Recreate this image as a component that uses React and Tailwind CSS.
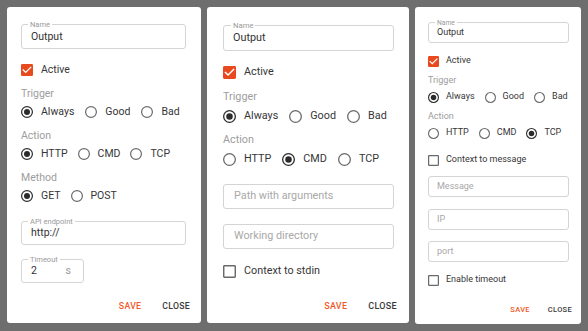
import React from "react";

const FONT = { fontFamily: 'Roboto, "Liberation Sans", Arial, sans-serif' };

function Radio({ checked, cls }) {
  return (
    <svg viewBox="0 0 20 20" className={cls + " shrink-0"}>
      <circle cx="10" cy="10" r="9" fill="none" stroke={checked ? "#2b2b2b" : "#6a6a6a"} strokeWidth="2" />
      {checked && <circle cx="10" cy="10" r="5" fill="#2b2b2b" />}
    </svg>
  );
}

function Check({ checked, cls }) {
  if (checked) {
    return (
      <svg viewBox="3 3 18 18" className={cls + " shrink-0"}>
        <rect x="3" y="3" width="18" height="18" rx="2" fill="#e8491d" />
        <path d="M10 17l-5-5 1.41-1.41L10 14.17l7.59-7.59L19 8l-9 9z" fill="#fff" />
      </svg>
    );
  }
  return (
    <svg viewBox="3 3 18 18" className={cls + " shrink-0"}>
      <path
        d="M19 5v14H5V5h14m0-2H5c-1.1 0-2 .9-2 2v14c0 1.1.9 2 2 2h14c1.1 0 2-.9 2-2V5c0-1.1-.9-2-2-2z"
        fill="#6a6a6a"
      />
    </svg>
  );
}

function RadioRow({ options, selected, rowCls, itemCls, iconCls }) {
  return (
    <div className={"flex items-center " + rowCls}>
      {options.map((o) => (
        <div key={o} className={"flex items-center " + itemCls}>
          <Radio checked={o === selected} cls={iconCls} />
          <span>{o}</span>
        </div>
      ))}
    </div>
  );
}

function Field({ label, value, placeholder, boxCls, labelCls, suffix }) {
  return (
    <div className={"relative rounded-[3px] border border-[#d4d4d4] flex items-center " + boxCls}>
      {label && (
        <span className={"absolute bg-white text-[#9a9a9a] leading-none " + labelCls}>{label}</span>
      )}
      {value ? (
        <span className="text-[#333333] flex-1">{value}</span>
      ) : (
        <span className="text-[#a8a8a8] flex-1">{placeholder}</span>
      )}
      {suffix && <span className="text-[#9a9a9a]">{suffix}</span>}
    </div>
  );
}

function Buttons({ cls, gapCls }) {
  return (
    <div className={"flex items-center justify-end font-medium tracking-[0.3px] " + cls}>
      <div className={"flex items-center " + gapCls}>
        <span className="text-[#f05a2a]">SAVE</span>
        <span className="text-[#3a3a3a]">CLOSE</span>
      </div>
    </div>
  );
}

function Panel1() {
  return (
    <div className="w-[194px] h-[316px] bg-white rounded-[3px] shrink-0 flex flex-col pl-[14px] pr-[15px] pt-[17px] text-[10.5px] text-[#363636]">
      <Field label="Name" value="Output" boxCls="h-[25px] px-[9px]" labelCls="text-[7.5px] -top-[4px] left-[6px] px-[2px]" />
      <div className="mt-[12px] h-[18px] flex items-center gap-[8px]">
        <Check checked cls="w-[12px] h-[12px]" />
        <span>Active</span>
      </div>
      <div className="mt-[7px] h-[16px] flex items-center text-[#9d9d9d]">Trigger</div>
      <RadioRow options={["Always", "Good", "Bad"]} selected="Always" rowCls="mt-[1px] h-[18px] gap-[11px]" itemCls="gap-[8px]" iconCls="w-[12px] h-[12px]" />
      <div className="mt-[7px] h-[16px] flex items-center text-[#9d9d9d]">Action</div>
      <RadioRow options={["HTTP", "CMD", "TCP"]} selected="HTTP" rowCls="mt-[1px] h-[18px] gap-[10px]" itemCls="gap-[8px]" iconCls="w-[12px] h-[12px]" />
      <div className="mt-[7px] h-[16px] flex items-center text-[#9d9d9d]">Method</div>
      <RadioRow options={["GET", "POST"]} selected="GET" rowCls="mt-[1px] h-[18px] gap-[10px]" itemCls="gap-[8px]" iconCls="w-[12px] h-[12px]" />
      <Field label="API endpoint" value="http://" boxCls="mt-[16px] h-[24px] px-[9px]" labelCls="text-[7.5px] -top-[4px] left-[6px] px-[2px]" />
      <Field label="Timeout" value="2" suffix="s" boxCls="mt-[14px] h-[24px] w-[63px] pl-[9px] pr-[12px]" labelCls="text-[7.5px] -top-[4px] left-[6px] px-[2px]" />
      <Buttons cls="mt-[14px] h-[20px] -mr-[4px] text-[8.7px]" gapCls="gap-[21px]" />
    </div>
  );
}

function Panel2() {
  return (
    <div className="w-[202px] h-[316px] bg-white rounded-[3px] shrink-0 flex flex-col pl-[16px] pr-[15px] pt-[18px] text-[10.8px] text-[#363636]">
      <Field label="Name" value="Output" boxCls="h-[26px] px-[9px]" labelCls="text-[7.7px] -top-[4px] left-[7px] px-[2px]" />
      <div className="mt-[12px] h-[18px] flex items-center gap-[8px]">
        <Check checked cls="w-[13px] h-[13px]" />
        <span>Active</span>
      </div>
      <div className="mt-[8px] h-[16px] flex items-center text-[#9d9d9d]">Trigger</div>
      <RadioRow options={["Always", "Good", "Bad"]} selected="Always" rowCls="mt-[1px] h-[20px] gap-[11px]" itemCls="gap-[8px]" iconCls="w-[13px] h-[13px]" />
      <div className="mt-[6px] h-[16px] flex items-center text-[#9d9d9d]">Action</div>
      <RadioRow options={["HTTP", "CMD", "TCP"]} selected="CMD" rowCls="mt-[1px] h-[20px] gap-[11px]" itemCls="gap-[8px]" iconCls="w-[13px] h-[13px]" />
      <Field placeholder="Path with arguments" boxCls="mt-[15px] h-[25px] px-[10px]" />
      <Field placeholder="Working directory" boxCls="mt-[15px] h-[25px] px-[10px]" />
      <div className="mt-[13px] h-[18px] flex items-center gap-[8px]">
        <Check cls="w-[13px] h-[13px]" />
        <span>Context to stdin</span>
      </div>
      <Buttons cls="mt-[17px] h-[20px] -mr-[3px] text-[9px]" gapCls="gap-[21px]" />
    </div>
  );
}

function Panel3() {
  return (
    <div className="w-[166px] h-[317px] bg-white rounded-[3px] shrink-0 flex flex-col pl-[13px] pr-[12px] pt-[15px] text-[9px] text-[#363636]">
      <Field label="Name" value="Output" boxCls="h-[21px] px-[8px]" labelCls="text-[6.7px] -top-[3px] left-[6px] px-[2px]" />
      <div className="mt-[10px] h-[16px] flex items-center gap-[7px]">
        <Check checked cls="w-[11px] h-[11px]" />
        <span>Active</span>
      </div>
      <div className="mt-[5px] h-[14px] flex items-center text-[#9d9d9d]">Trigger</div>
      <RadioRow options={["Always", "Good", "Bad"]} selected="Always" rowCls="mt-[1px] h-[16px] gap-[10px]" itemCls="gap-[7px]" iconCls="w-[11px] h-[11px]" />
      <div className="mt-[5px] h-[14px] flex items-center text-[#9d9d9d]">Action</div>
      <RadioRow options={["HTTP", "CMD", "TCP"]} selected="TCP" rowCls="mt-[1px] h-[16px] gap-[10px]" itemCls="gap-[7px]" iconCls="w-[11px] h-[11px]" />
      <div className="mt-[11px] h-[16px] flex items-center gap-[7px]">
        <Check cls="w-[11px] h-[11px]" />
        <span>Context to message</span>
      </div>
      <Field placeholder="Message" boxCls="mt-[8px] h-[21px] px-[8px]" />
      <Field placeholder="IP" boxCls="mt-[12px] h-[21px] px-[8px]" />
      <Field placeholder="port" boxCls="mt-[11px] h-[21px] px-[8px]" />
      <div className="mt-[10px] h-[16px] flex items-center gap-[7px]">
        <Check cls="w-[11px] h-[11px]" />
        <span>Enable timeout</span>
      </div>
      <Buttons cls="mt-[13px] h-[18px] -mr-[3px] text-[7.5px]" gapCls="gap-[18px]" />
    </div>
  );
}

export default function App() {
  return (
    <div style={FONT} className="w-[588px] h-[331px] bg-[#6e6e6e] flex items-start gap-[6px] px-[7px] pt-[7px] overflow-hidden">
      <Panel1 />
      <Panel2 />
      <Panel3 />
    </div>
  );
}
